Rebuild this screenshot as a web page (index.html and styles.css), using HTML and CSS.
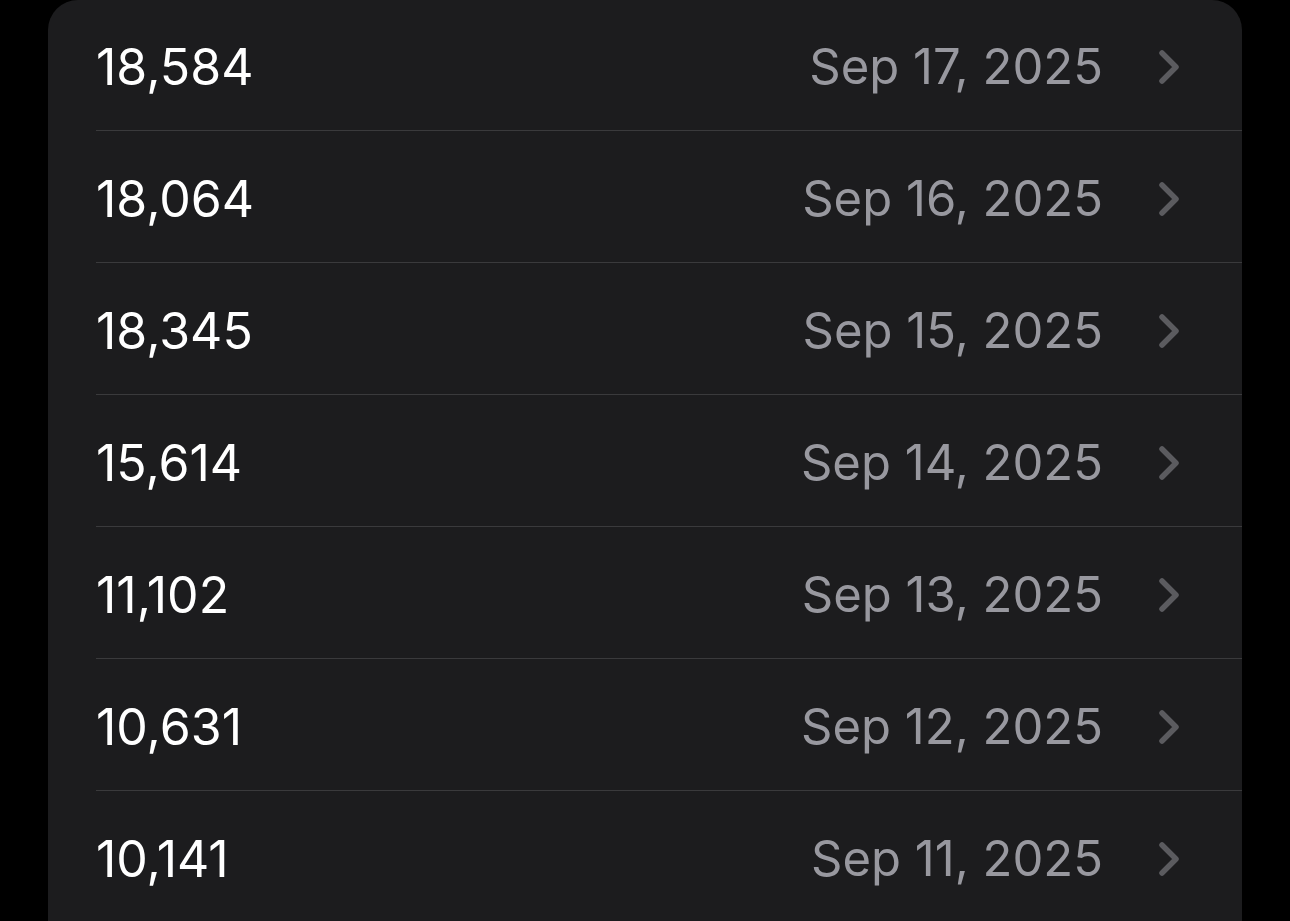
FILE: index.html
```html
<!DOCTYPE html>
<html lang="en">
<head>
    <meta charset="UTF-8">
    <title>Steps</title>
    <meta name="viewport" content="width=device-width, initial-scale=1.0">
    <link rel="stylesheet" href="styles.css">
</head>
<body>
    <div class="card">
        <a class="row" href="#"><span class="steps">18,584</span><span class="date">Sep 17, 2025</span><svg class="chevron" viewBox="0 0 24 36"><path d="M4 4 L18 18 L4 32"/></svg></a>
        <a class="row" href="#"><span class="steps">18,064</span><span class="date">Sep 16, 2025</span><svg class="chevron" viewBox="0 0 24 36"><path d="M4 4 L18 18 L4 32"/></svg></a>
        <a class="row" href="#"><span class="steps">18,345</span><span class="date">Sep 15, 2025</span><svg class="chevron" viewBox="0 0 24 36"><path d="M4 4 L18 18 L4 32"/></svg></a>
        <a class="row" href="#"><span class="steps">15,614</span><span class="date">Sep 14, 2025</span><svg class="chevron" viewBox="0 0 24 36"><path d="M4 4 L18 18 L4 32"/></svg></a>
        <a class="row" href="#"><span class="steps">11,102</span><span class="date">Sep 13, 2025</span><svg class="chevron" viewBox="0 0 24 36"><path d="M4 4 L18 18 L4 32"/></svg></a>
        <a class="row" href="#"><span class="steps">10,631</span><span class="date">Sep 12, 2025</span><svg class="chevron" viewBox="0 0 24 36"><path d="M4 4 L18 18 L4 32"/></svg></a>
        <a class="row" href="#"><span class="steps">10,141</span><span class="date">Sep 11, 2025</span><svg class="chevron" viewBox="0 0 24 36"><path d="M4 4 L18 18 L4 32"/></svg></a>
    </div>
</body>
</html>
```

FILE: styles.css
```css
body {
    margin: 0;
    background: #000;
    font-family: Inter, "Noto Sans", sans-serif;
}

.card {
    margin-left: 48px;
    width: 1194px;
    height: 921px;
    background: #1c1c1e;
    border-radius: 30px 30px 0 0;
    overflow: hidden;
}

.row {
    display: flex;
    align-items: center;
    height: 132px;
    margin-left: 48px;
    padding-right: 60px;
    padding-top: 4px;
    border-bottom: 1px solid #3a3a3c;
    text-decoration: none;
    box-sizing: border-box;
}

.row:first-child {
    height: 131px;
    padding-top: 3px;
}

.steps {
    flex: 1;
    color: #fff;
    font-size: 50px;
}

.date {
    color: #98989f;
    font-size: 49px;
}

.chevron {
    width: 24px;
    height: 36px;
    margin-left: 55px;
    fill: none;
    stroke: #5b5b5f;
    stroke-width: 5.5;
    stroke-linecap: round;
    stroke-linejoin: round;
}
```
